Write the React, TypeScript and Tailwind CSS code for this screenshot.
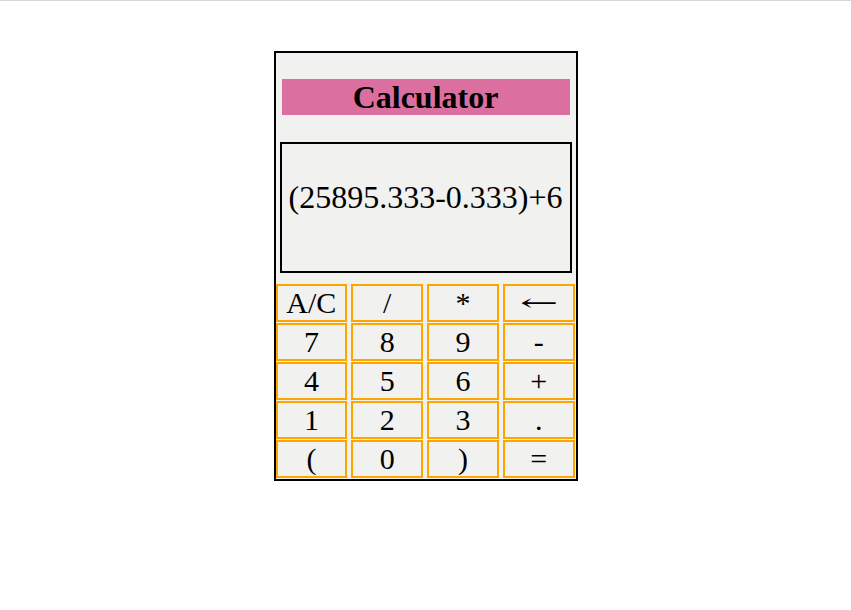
import React from "react";

const keys = ["A/C", "/", "*", "←", "7", "8", "9", "-", "4", "5", "6", "+", "1", "2", "3", ".", "(", "0", ")", "="];

export default function App() {
  return (
    <div className="min-h-[610px] bg-white border-t border-[#d6d6d6]" style={{ fontFamily: '"Liberation Serif", "Times New Roman", serif' }}>
      <div className="mx-auto mt-[50px] w-[304px] border-2 border-black bg-[#f1f1f0] pb-[1px]">
        <h1 className="mx-[6px] mt-[26px] h-[36px] bg-[#db70a0] text-center text-[32px] font-bold leading-[36px] text-black">
          Calculator
        </h1>
        <div className="mx-[4px] mt-[27px] h-[131px] border-2 border-black pt-[35px] text-center text-[32px] leading-[37px] text-black">
          (25895.333-0.333)+6
        </div>
        <div className="mt-[11px] grid w-[299px] grid-cols-4 gap-x-[4px] gap-y-[1px]">
          {keys.map((k) => (
            <button
              key={k}
              className="flex h-[38px] items-center justify-center border-2 border-[#ffa500] bg-[#f1f1f0] text-[30px] leading-none text-black"
              style={{ fontFamily: '"Liberation Serif", "Times New Roman", serif' }}
            >
              {k === "←" ? (
                <span className="scale-x-[1.9] text-[24px] font-light" style={{ fontFamily: '"DejaVu Serif", serif' }}>
                  ←
                </span>
              ) : (
                k
              )}
            </button>
          ))}
        </div>
      </div>
    </div>
  );
}
